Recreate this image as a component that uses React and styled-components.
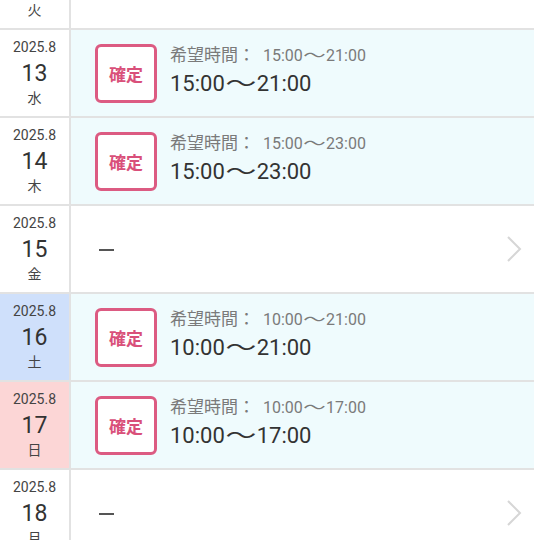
import styled, { createGlobalStyle } from "styled-components";

const GlobalStyle = createGlobalStyle`
  html, body {
    margin: 0;
    padding: 0;
    background: #ffffff;
    overflow: hidden;
  }
  body {
    font-family: Roboto, "Noto Sans CJK JP", sans-serif;
    color: #333333;
  }
`;

const List = styled.div`
  display: flex;
  flex-direction: column;
  margin-top: -58px;
  width: 534px;
`;

const Row = styled.div`
  display: flex;
  height: 86px;
  border-bottom: 2px solid #e2e2e2;
  background: ${(p) => (p.$confirmed ? "#effbfd" : "#ffffff")};
`;

const DateCell = styled.div`
  width: 69px;
  flex-shrink: 0;
  padding-top: 8px;
  border-right: 2px solid #e2e2e2;
  display: flex;
  flex-direction: column;
  align-items: center;
  background: ${(p) =>
    p.$day === "土" ? "#cfe0fb" : p.$day === "日" ? "#fcd6d6" : "#ffffff"};
`;

const Month = styled.div`
  font-size: 14px;
  line-height: 18px;
  color: #444;
`;

const DayNum = styled.div`
  font-size: 23px;
  line-height: 28px;
  margin-top: 4px;
  color: #333;
`;

const Weekday = styled.div`
  font-size: 14px;
  line-height: 18px;
  color: #444;
  font-family: "Noto Sans CJK JP", sans-serif;
`;

const Body = styled.div`
  flex: 1;
  display: flex;
  align-items: center;
  padding-left: 24px;
  gap: 13px;
  position: relative;
`;

const Badge = styled.div`
  width: 56px;
  height: 53px;
  border: 3px solid #dc5b82;
  border-radius: 6px;
  background: #ffffff;
  display: flex;
  align-items: center;
  justify-content: center;
  color: #d9507a;
  font-family: "Noto Sans CJK JP", sans-serif;
  font-weight: 700;
  font-size: 17px;
`;

const Info = styled.div`
  display: flex;
  flex-direction: column;
  gap: 2px;
  margin-top: -4px;
`;

const Hope = styled.div`
  display: flex;
  align-items: baseline;
  font-size: 17px;
  color: #7a7a7a;
  font-family: "Noto Sans CJK JP", sans-serif;
  line-height: 22px;
`;

const HopeTime = styled.span`
  font-family: Roboto, "Noto Sans CJK JP", sans-serif;
  font-size: 16px;
  margin-left: 8px;
`;

const Time = styled.div`
  font-size: 22px;
  line-height: 30px;
  color: #333;
`;

const Tilde = styled.span`
  display: inline-block;
  width: 1.45em;
  line-height: 1;
  text-align: center;
  font-family: "Noto Sans CJK JP", sans-serif;
  transform: scaleX(1.4);
`;

const Dash = styled.div`
  width: 15px;
  height: 2px;
  background: #555;
  margin-left: 4px;
  margin-top: 2px;
`;

const Chevron = styled.svg`
  position: absolute;
  right: 12px;
  top: 50%;
  transform: translateY(-50%);
`;

const days = [
  { day: "12", wd: "火", empty: true },
  { day: "13", wd: "水", from: "15:00", to: "21:00" },
  { day: "14", wd: "木", from: "15:00", to: "23:00" },
  { day: "15", wd: "金", empty: true },
  { day: "16", wd: "土", from: "10:00", to: "21:00" },
  { day: "17", wd: "日", from: "10:00", to: "17:00" },
  { day: "18", wd: "月", empty: true },
];

function Range({ from, to }) {
  return (
    <>
      {from}
      <Tilde>〜</Tilde>
      {to}
    </>
  );
}

function App() {
  return (
    <>
      <GlobalStyle />
      <List>
        {days.map((d) => (
          <Row key={d.day} $confirmed={!d.empty}>
            <DateCell $day={d.wd}>
              <Month>2025.8</Month>
              <DayNum>{d.day}</DayNum>
              <Weekday>{d.wd}</Weekday>
            </DateCell>
            <Body>
              {d.empty ? (
                <>
                  <Dash />
                  <Chevron width="16" height="26" viewBox="0 0 16 26">
                    <path d="M2 1 L14 13 L2 25" fill="none" stroke="#d6d6d6" strokeWidth="2" />
                  </Chevron>
                </>
              ) : (
                <>
                  <Badge>確定</Badge>
                  <Info>
                    <Hope>
                      希望時間：
                      <HopeTime>
                        <Range from={d.from} to={d.to} />
                      </HopeTime>
                    </Hope>
                    <Time>
                      <Range from={d.from} to={d.to} />
                    </Time>
                  </Info>
                </>
              )}
            </Body>
          </Row>
        ))}
      </List>
    </>
  );
}

export default App;
